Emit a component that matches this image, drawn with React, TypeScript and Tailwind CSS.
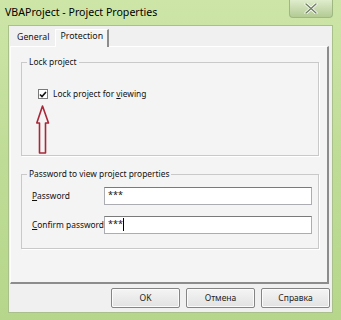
import React from 'react';

const font = { fontFamily: '"Noto Sans", "DejaVu Sans", sans-serif' };

const Button: React.FC<{ label: string }> = ({ label }) => (
  <button className="w-[69px] h-[20px] border border-[#858585] bg-gradient-to-b from-[#f4f4f4] to-[#e2e2e2] text-[8.5px] text-[#222] rounded-[2px] shadow-[inset_0_0_0_1px_#fbfbfb]">
    {label}
  </button>
);

const App: React.FC = () => {
  return (
    <div
      className="w-[341px] h-[320px] bg-gradient-to-b from-[#cde6a8] via-[#bfdc96] to-[#b6d78b] flex flex-col relative overflow-hidden"
      style={font}
    >
      {/* Title bar */}
      <div className="h-[25px] flex items-center pl-[5px] text-[10.6px] text-black">
        VBAProject - Project Properties
      </div>
      <div className="absolute top-0 right-[8px] w-[44px] h-[18px] rounded-b-[4px] border border-t-0 border-[#9fb882] bg-gradient-to-b from-[#dfeccd] to-[#b3cb93] flex items-center justify-center">
        <svg width="14" height="11" viewBox="0 0 14 11">
          <path d="M2 1 L12 10 M12 1 L2 10" stroke="#ffffff" strokeWidth="3" strokeLinecap="round" />
          <path d="M2 1 L12 10 M12 1 L2 10" stroke="#6f7f62" strokeWidth="1.4" strokeLinecap="round" />
        </svg>
      </div>

      {/* Client area */}
      <div className="mx-[8px] h-[288px] bg-[#f0f0f0] flex flex-col border border-[#a9c08a]">
        {/* Tabs */}
        <div className="h-[19px] mt-[1px] flex items-end pl-[2px] text-[8.8px] text-[#111]">
          <div className="px-[6px] pb-[2px]">General</div>
          <div className="h-[18px] px-[4px] pb-[3px] flex items-center bg-[#f4f4f4] border-t border-l border-[#ffffff] border-r-2 border-r-[#8c8c8c] -mb-[1px] relative z-10">
            Protection
          </div>
        </div>

        {/* Tab panel */}
        <div className="ml-[1px] mr-[3px] h-[238px] border-t border-l border-[#ffffff] border-r-2 border-b-2 border-r-[#8c8c8c] border-b-[#8c8c8c] bg-[#f4f4f4] flex flex-col pl-[10px] pr-[8px] pt-[15px] text-[8.4px] text-[#111]">
          {/* Lock project group */}
          <div className="relative h-[94px] border border-[#c9c9c9] shadow-[1px_1px_0_#ffffff]">
            <span className="absolute -top-[7px] left-[5px] px-[2px] bg-[#f4f4f4] leading-[12px]">Lock project</span>
            <div className="flex items-center gap-[5px] mt-[25px] ml-[16px]">
              <div className="w-[10px] h-[10px] border border-[#7a7a7a] bg-white flex items-center justify-center">
                <svg width="8" height="7" viewBox="0 0 8 7">
                  <path d="M1 3.5 L3 5.5 L7 1" stroke="#111" strokeWidth="1.6" fill="none" />
                </svg>
              </div>
              <span>
                Lock project for <span className="underline">v</span>iewing
              </span>
            </div>
            <svg className="absolute left-[14px] top-[42px]" width="14" height="50" viewBox="0 0 14 50">
              <path
                d="M6.5 1 L12.5 18 L9.5 18 L9.5 48 L3.5 48 L3.5 18 L0.8 18 Z"
                fill="none"
                stroke="#a8283a"
                strokeWidth="1.6"
                strokeLinejoin="round"
              />
            </svg>
          </div>

          {/* Password group */}
          <div className="relative h-[75px] mt-[18px] border border-[#c9c9c9] shadow-[1px_1px_0_#ffffff] flex flex-col gap-[11px] pt-[12px] pr-[6px]">
            <span className="absolute -top-[7px] left-[5px] px-[2px] bg-[#f4f4f4] leading-[12px]">
              Password to view project properties
            </span>
            <div className="flex items-center">
              <span className="w-[82px] pl-[10px]">
                <span className="underline">P</span>assword
              </span>
              <div className="flex-1 h-[18px] bg-white border border-[#abadb3] border-t-[#7a7a7a] text-[9px] leading-[14px] pl-[3px]">
                ***
              </div>
            </div>
            <div className="flex items-center">
              <span className="w-[82px] pl-[10px] whitespace-nowrap">
                <span className="underline">C</span>onfirm password
              </span>
              <div className="flex-1 h-[18px] bg-white border border-[#abadb3] border-t-[#7a7a7a] text-[9px] leading-[14px] pl-[3px] flex items-start">
                ***<span className="w-[1px] h-[13px] bg-black mt-[1px]"></span>
              </div>
            </div>
          </div>
        </div>

        {/* Buttons */}
        <div className="flex justify-end gap-[6px] mt-[4px] pr-[2px]">
          <Button label="OK" />
          <Button label="Отмена" />
          <Button label="Справка" />
        </div>
      </div>
    </div>
  );
};

export default App;
